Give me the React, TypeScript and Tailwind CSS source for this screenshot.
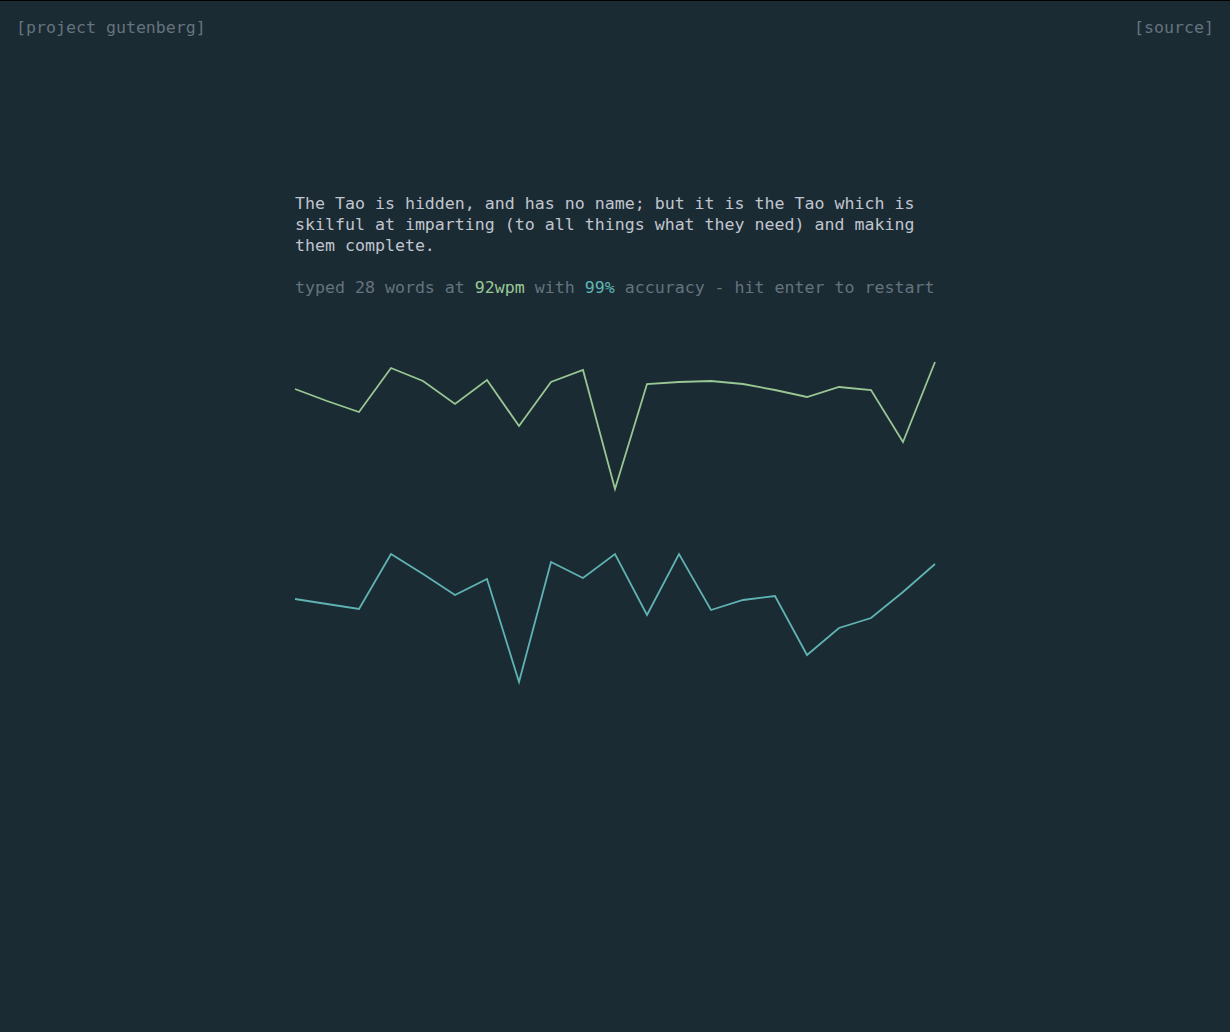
const wpm = [389, 401, 412, 368, 381, 404, 380, 426, 382, 370, 489, 384, 382, 381, 384, 390, 397, 387, 390, 442, 362];
const acc = [599, 604, 609, 554, 574, 595, 579, 682, 562, 578, 554, 615, 554, 610, 600, 596, 655, 628, 618, 592, 564];

const toPoints = (ys: number[], top: number) =>
  ys.map((y, i) => `${i * 32},${y - top}`).join(' ');

const Chart = ({ ys, top, color }: { ys: number[]; top: number; color: string }) => (
  <svg width="640" height="180" viewBox="0 0 640 180" className="block overflow-visible">
    <polyline points={toPoints(ys, top)} fill="none" stroke={color} strokeWidth="1.8" strokeLinejoin="miter" />
  </svg>
);

export default function App() {
  return (
    <div
      className="min-h-[1032px] bg-[#1b2b34] border-t border-black text-[16.6px] leading-[21px] text-[#c0c5ce]"
      style={{ fontFamily: '"DejaVu Sans Mono", "Liberation Mono", monospace' }}
    >
      <header className="flex justify-between px-4 pt-4 text-[#65737e]">
        <a href="#">[project gutenberg]</a>
        <a href="#">[source]</a>
      </header>

      <main className="w-[640px] mx-auto mt-[155px]">
        <p>
          The Tao is hidden, and has no name; but it is the Tao which is skilful at imparting (to all
          things what they need) and making them complete.
        </p>
        <p className="mt-[21px] text-[#65737e] whitespace-nowrap">
          typed 28 words at <span className="text-[#99c794]">92wpm</span> with{' '}
          <span className="text-[#5fb3b3]">99%</span> accuracy - hit enter to restart
        </p>

        <div className="mt-[32px] flex flex-col gap-5">
          <Chart ys={wpm} top={330} color="#99c794" />
          <Chart ys={acc} top={530} color="#5fb3b3" />
        </div>
      </main>
    </div>
  );
}
